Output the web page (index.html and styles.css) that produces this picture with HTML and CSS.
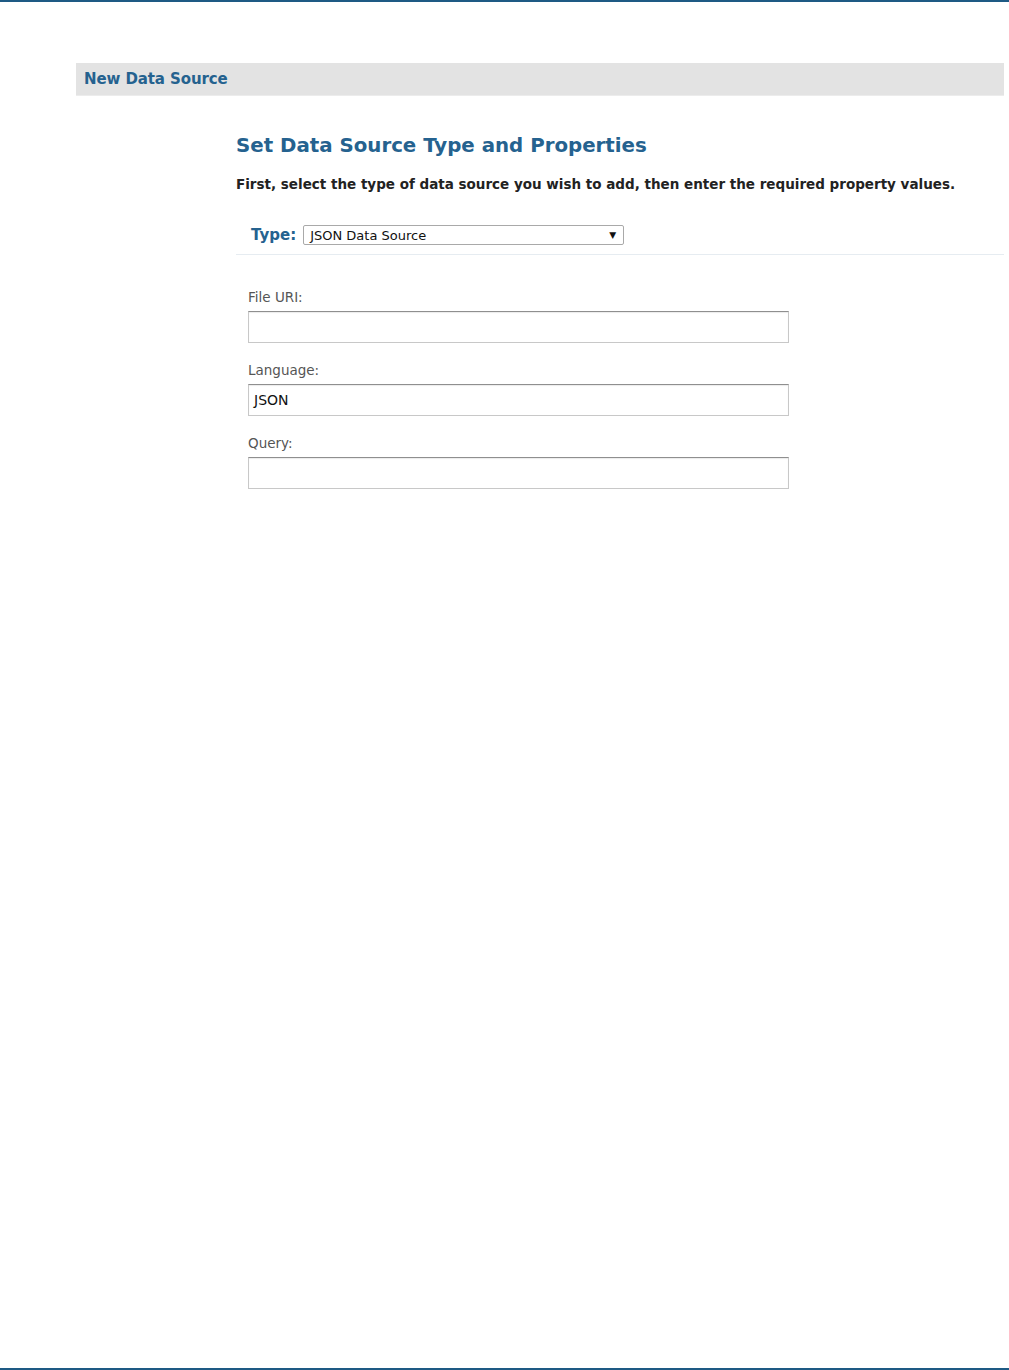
FILE: index.html
```html
<!DOCTYPE html>
<html>
<head>
<meta charset="utf-8">
<link rel="stylesheet" href="styles.css">
</head>
<body>
<div class="page">
  <div class="panel">
    <div class="panel-title">New Data Source</div>
    <div class="content">
      <h1 class="heading">Set Data Source Type and Properties</h1>
      <p class="intro">First, select the type of data source you wish to add, then enter the required property values.</p>
      <div class="type-row">
        <span class="type-label">Type:</span>
        <div class="select">
          <span class="select-text">JSON Data Source</span>
          <span class="select-arrow">&#9660;</span>
        </div>
      </div>
      <div class="fields">
        <div class="field">
          <div class="field-label">File URI:</div>
          <div class="input"></div>
        </div>
        <div class="field">
          <div class="field-label">Language:</div>
          <div class="input">JSON</div>
        </div>
        <div class="field">
          <div class="field-label">Query:</div>
          <div class="input"></div>
        </div>
      </div>
    </div>
  </div>
</div>
</body>
</html>
```

FILE: styles.css
```css
html, body {
  margin: 0;
  padding: 0;
  background: #fff;
}
body {
  font-family: "DejaVu Sans", Verdana, sans-serif;
  color: #222;
}
.page {
  box-sizing: border-box;
  height: 1370px;
  border-top: 2px solid #1e5a84;
  border-bottom: 2px solid #1e5a84;
  padding-top: 61px;
}
.panel {
  margin-left: 76px;
  width: 928px;
}
.panel-title {
  background: #e3e3e3;
  height: 33px;
  line-height: 32px;
  padding-left: 8px;
  font-size: 15px;
  font-weight: bold;
  color: #25628f;
  letter-spacing: -0.1px;
  border-bottom: 1px solid #ececec;
  box-sizing: border-box;
}
.content {
  margin-left: 160px;
  padding-top: 36px;
}
.heading {
  margin: 0;
  font-size: 19.8px;
  font-weight: bold;
  color: #25628f;
  line-height: 28px;
}
.intro {
  margin: 15px 0 0 0;
  font-size: 13.5px;
  font-weight: bold;
  color: #222;
  line-height: 18px;
}
.type-row {
  display: flex;
  align-items: center;
  gap: 7px;
  margin-top: 32px;
  padding-left: 15px;
  padding-bottom: 9px;
  border-bottom: 1px solid #e6ecf1;
}
.type-label {
  font-size: 15px;
  font-weight: bold;
  color: #25628f;
}
.select {
  box-sizing: border-box;
  width: 321px;
  height: 20px;
  border: 1px solid #a9a9a9;
  border-radius: 2px;
  display: flex;
  align-items: center;
  justify-content: space-between;
  padding: 0 7px 0 6px;
  font-size: 13px;
  color: #111;
}
.select-arrow {
  font-size: 9px;
  color: #111;
}
.fields {
  padding-left: 12px;
  padding-top: 34px;
  display: flex;
  flex-direction: column;
  gap: 19px;
}
.field-label {
  font-size: 13.5px;
  color: #555;
  line-height: 17px;
  margin-bottom: 5px;
}
.input {
  box-sizing: border-box;
  width: 541px;
  height: 32px;
  border: 1px solid #c8c8c8;
  border-top-color: #8f8f8f;
  box-shadow: inset 0 1px 1px rgba(0,0,0,0.08);
  padding-left: 5px;
  line-height: 30px;
  font-size: 14px;
  color: #111;
}
```
